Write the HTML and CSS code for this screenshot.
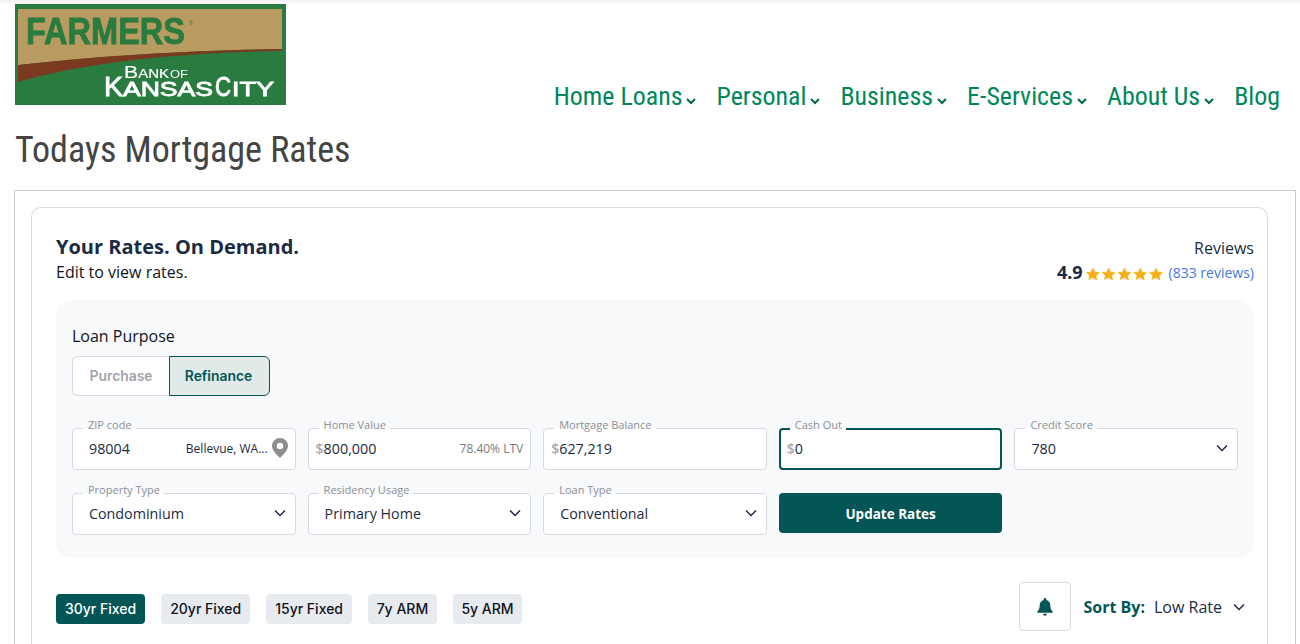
FILE: index.html
```html
<!DOCTYPE html>
<html lang="en">
<head>
<meta charset="utf-8">
<title>Todays Mortgage Rates</title>
<link rel="stylesheet" href="styles.css">
</head>
<body>
<header class="site-header">
  <svg class="logo" viewBox="0 0 271 101" width="271" height="101" role="img" aria-label="Farmers Bank of Kansas City">
    <rect width="271" height="101" fill="#2a7b3f"/>
    <path d="M3 5H267V45C190 46 90 51 3 61Z" fill="#b99b62"/>
    <path d="M3 61C90 51 190 46 267 45V47C170 48 70 58 3 78Z" fill="#7a3a20"/>
    <text class="logo-farmers" x="11" y="40" textLength="159" lengthAdjust="spacingAndGlyphs">FARMERS</text>
    <text class="logo-tm" x="174" y="21">®</text>
    <text class="logo-bank" x="109" y="74" textLength="45" lengthAdjust="spacingAndGlyphs"><tspan class="logo-b">B</tspan>ANK</text>
    <text class="logo-of" x="155" y="74" textLength="18" lengthAdjust="spacingAndGlyphs">OF</text>
    <text class="logo-city" y="92"><tspan class="logo-cap" x="89" textLength="19" lengthAdjust="spacingAndGlyphs">K</tspan><tspan x="108" textLength="90" lengthAdjust="spacingAndGlyphs">ANSAS</tspan> <tspan class="logo-cap" x="200" textLength="16" lengthAdjust="spacingAndGlyphs">C</tspan><tspan x="217" textLength="42" lengthAdjust="spacingAndGlyphs">ITY</tspan></text>
  </svg>
  <nav class="main-nav">
    <a class="nav-item">Home Loans<svg class="nav-caret" viewBox="0 0 10 8"><path d="M1 2l4 4 4-4"/></svg></a>
    <a class="nav-item">Personal<svg class="nav-caret" viewBox="0 0 10 8"><path d="M1 2l4 4 4-4"/></svg></a>
    <a class="nav-item">Business<svg class="nav-caret" viewBox="0 0 10 8"><path d="M1 2l4 4 4-4"/></svg></a>
    <a class="nav-item">E-Services<svg class="nav-caret" viewBox="0 0 10 8"><path d="M1 2l4 4 4-4"/></svg></a>
    <a class="nav-item">About Us<svg class="nav-caret" viewBox="0 0 10 8"><path d="M1 2l4 4 4-4"/></svg></a>
    <a class="nav-item">Blog</a>
  </nav>
</header>
<h1 class="page-title">Todays Mortgage Rates</h1>
<main class="outer-box">
  <section class="card">
    <div class="card-head">
      <div>
        <h2 class="card-title">Your Rates. On Demand.</h2>
        <p class="card-sub">Edit to view rates.</p>
      </div>
      <div class="reviews">
        <div class="reviews-label">Reviews</div>
        <div class="reviews-line">
          <span class="score">4.9</span>
          <svg class="stars" viewBox="0 0 80 14" width="78" height="14">
            <path id="s" d="M7 1l2 4.100 4.500.5-3.300 3.100.9 4.500L7 10.500l-4.100 2.200.9-4.500L.5 5.600 5 5.100z"/>
            <use href="#s" x="16.200"/><use href="#s" x="32.400"/><use href="#s" x="48.600"/><use href="#s" x="64.800"/>
          </svg>
          <a class="review-link">(833 reviews)</a>
        </div>
      </div>
    </div>
    <div class="panel">
      <div class="purpose-label">Loan Purpose</div>
      <div class="toggle">
        <button class="toggle-btn">Purchase</button>
        <button class="toggle-btn is-on">Refinance</button>
      </div>
      <div class="form-grid">
        <div class="field"><span class="legend">ZIP code</span><span class="val val-zip">98004</span><span class="city">Bellevue, WA...</span>
          <svg class="pin" viewBox="0 0 16 20" width="16" height="20"><path fill-rule="evenodd" d="M8 0a8 8 0 0 1 8 8c0 4.500-5 9-8 12-3-3-8-7.500-8-12a8 8 0 0 1 8-8zm0 4.800a3.200 3.200 0 1 0 0 6.400 3.200 3.200 0 0 0 0-6.400z"/></svg></div>
        <div class="field"><span class="legend">Home Value</span><span class="dollar">$</span><span class="val">800,000</span><span class="ltv">78.40% LTV</span></div>
        <div class="field"><span class="legend">Mortgage Balance</span><span class="dollar">$</span><span class="val">627,219</span></div>
        <div class="field is-focus"><span class="legend">Cash Out</span><span class="dollar">$</span><span class="val">0</span></div>
        <div class="field"><span class="legend">Credit Score</span><span class="val val-sel">780</span><svg class="chev" viewBox="0 0 12 8"><path d="M1 1.500l5 5 5-5"/></svg></div>
        <div class="field"><span class="legend">Property Type</span><span class="val val-sel">Condominium</span><svg class="chev" viewBox="0 0 12 8"><path d="M1 1.500l5 5 5-5"/></svg></div>
        <div class="field"><span class="legend">Residency Usage</span><span class="val val-sel">Primary Home</span><svg class="chev" viewBox="0 0 12 8"><path d="M1 1.500l5 5 5-5"/></svg></div>
        <div class="field"><span class="legend">Loan Type</span><span class="val val-sel">Conventional</span><svg class="chev" viewBox="0 0 12 8"><path d="M1 1.500l5 5 5-5"/></svg></div>
        <button class="update-btn">Update Rates</button>
      </div>
    </div>
    <div class="toolbar">
      <div class="tabs">
        <button class="tab is-on">30yr Fixed</button>
        <button class="tab">20yr Fixed</button>
        <button class="tab">15yr Fixed</button>
        <button class="tab tab-short">7y ARM</button>
        <button class="tab tab-short">5y ARM</button>
      </div>
      <div class="sort">
        <button class="bell-btn"><svg viewBox="0 0 16 18" width="16" height="18"><path d="M8 0a1.300 1.300 0 0 1 1.300 1.300v.6C11.800 2.500 13.300 4.600 13.300 7c0 3.500.8 5 2.300 6.500.4.500.1 1.300-.6 1.300H1c-.7 0-1-.8-.6-1.300C1.900 12 2.700 10.500 2.700 7c0-2.400 1.500-4.500 4-5.100v-.6A1.300 1.300 0 0 1 8 0zM6 15.800h4a2 2 0 0 1-4 0z"/></svg></button>
        <span class="sort-label">Sort By:</span>
        <span class="sort-val">Low Rate</span>
        <svg class="chev sort-chev" viewBox="0 0 12 8"><path d="M1 1.500l5 5 5-5"/></svg>
      </div>
    </div>
  </section>
</main>
</body>
</html>
```
FILE: styles.css
```css
* { box-sizing: border-box; }
html, body { margin: 0; height: 644px; overflow: hidden; background: #fff; }
body { font-family: "Open Sans", "Liberation Sans", sans-serif; color: #1c2b44; border-top: 1px solid #f3f3f3; box-shadow: inset 0 3px 3px -2px #f0f0f0; }
button { font: inherit; cursor: pointer; }

.site-header { display: flex; justify-content: space-between; align-items: flex-end; height: 114px; padding: 3px 20px 3px 15px; }
.logo { display: block; align-self: flex-start; filter: blur(.35px); }
.logo text { font-family: "Liberation Sans", Arial, sans-serif; }
.logo-farmers { font-size: 37.500px; font-weight: 700; fill: #2a7b3f; stroke: #2a7b3f; stroke-width: .9; }
.logo-tm { font-size: 6px; fill: #2a7b3f; }
.logo-bank { font-size: 12px; fill: #fff; stroke: #fff; stroke-width: .2; }
.logo-b { font-size: 17px; }
.logo-of { font-size: 10px; fill: #fff; }
.logo-city { font-size: 21px; font-weight: 400; fill: #fff; stroke: #fff; stroke-width: .9; }
.logo-cap { font-size: 28px; }

.main-nav { display: flex; gap: 20px; align-items: baseline; }
.nav-item { font-family: "Roboto Condensed", Roboto, sans-serif; font-stretch: 75%; font-size: 25.900px; line-height: 32px; color: #00875a; display: flex; align-items: baseline; }
.nav-caret { width: 10px; height: 8px; margin: 0 0 2px 4px; fill: none; stroke: #00694a; stroke-width: 2; }

.page-title { margin: 14px 0 0 15px; font-family: "Roboto Condensed", Roboto, sans-serif; font-stretch: 75%; font-weight: 400; font-size: 36px; line-height: 42px; color: #444; }

.outer-box { margin: 19px 4px 0 14px; border: 1px solid #ccc; border-bottom: 0; padding: 16px 27px 0 16px; height: 460px; }
.card { border: 1px solid #d5dae2; border-bottom: 0; border-radius: 10px 10px 0 0; padding: 24px 13px 0 24px; height: 443px; }
.card-head { display: flex; justify-content: space-between; height: 68px; }
.card-title { margin: 3px 0 0; font-size: 20px; line-height: 24px; font-weight: 700; color: #1c2b44; }
.card-sub { margin: 2px 0 0; font-size: 16px; line-height: 22px; color: #10131a; }
.reviews { text-align: right; margin-top: 5px; }
.reviews-label { font-size: 16px; line-height: 22px; color: #1c2b44; }
.reviews-line { display: flex; align-items: center; gap: 3px; justify-content: flex-end; height: 24px; margin-top: 1px; }
.score { font-size: 18px; font-weight: 700; }
.stars { fill: #f5af14; stroke: #f5af14; stroke-width: .7; stroke-linejoin: round; margin-top: 3px; }
.review-link { font-size: 14px; color: #4678e0; margin-left: 2px; }

.panel { background: #f8f9fb; border-radius: 16px; padding: 24px 16px 24px; height: 258px; }
.purpose-label { font-size: 16px; line-height: 24px; color: #10131a; }
.toggle { display: flex; margin-top: 8px; }
.toggle-btn { font-family: Inter, sans-serif; font-weight: 600; font-size: 13.900px; height: 40px; background: #fff; color: #9fa3ab; border: 1px solid #d5dae2; border-right: 0; border-radius: 6px 0 0 6px; width: 97px; padding: 0; }
.toggle-btn.is-on { background: #e0eae8; color: #045555; border: 1px solid #045555; border-radius: 0 6px 6px 0; width: 101px; padding-right: 2px; }

.form-grid { display: grid; grid-template-columns: repeat(5, 1fr); column-gap: 12px; row-gap: 23px; margin-top: 32px; }
.field { position: relative; height: 42px; background: #fff; border: 1px solid #d5dae2; border-radius: 4px; display: flex; align-items: center; padding: 0 7px 2px; font-size: 14px; }
.field.is-focus { border: 2px solid #045555; padding: 0 6px 2px; }
.legend { position: absolute; top: -12px; left: 10px; padding: 0 4px 0 5px; font-size: 11px; line-height: 16px; color: #8b9098; background: linear-gradient(#f8f9fb 69%, #fff 69%); }
.is-focus .legend { left: 9px; top: -13px; }
.val { font-size: 14.300px; color: #1c2b44; }
.val-zip, .val-sel { margin-left: 9px; }
.dollar { color: #a9a9a9; font-weight: 600; font-size: 14px; }
.city { margin-left: auto; font-size: 12px; color: #1c2b44; margin-right: 4px; }
.pin { fill: #8d8d8d; flex: none; }
.ltv { margin-left: auto; font-size: 12px; color: #7a7a7a; }
.chev { width: 12px; height: 8px; margin-left: auto; margin-right: 2px; fill: none; stroke: #1c2b44; stroke-width: 1.500; }
.update-btn { height: 40px; background: #045555; color: #fff; border: 0; border-radius: 4px; padding: 2px 0 0; font-family: "Open Sans", sans-serif; font-weight: 700; font-size: 13.500px; }

.toolbar { display: flex; justify-content: space-between; align-items: center; margin-top: 24px; }
.tabs { display: flex; gap: 16px; margin-top: 4px; }
.tab { font-family: Inter, sans-serif; font-weight: 500; font-size: 14px; height: 30px; padding: 0 9px; background: #e7eaef; color: #10131a; border: 0; border-radius: 4px; }
.tab-short { padding: 0 8.600px; }
.tab.is-on { background: #045555; color: #fff; }
.sort { display: flex; align-items: center; }
.bell-btn { width: 52px; height: 49px; background: #fff; border: 1px solid #d5dae2; border-radius: 4px; display: flex; align-items: center; justify-content: center; padding: 0; }
.bell-btn svg { fill: #045555; }
.sort-label { margin-left: 13px; font-weight: 700; font-size: 16px; color: #045555; }
.sort-val { margin-left: 9px; font-size: 16px; color: #1c2b44; }
.sort-chev { margin: 0 9px 0 11px; }
```
